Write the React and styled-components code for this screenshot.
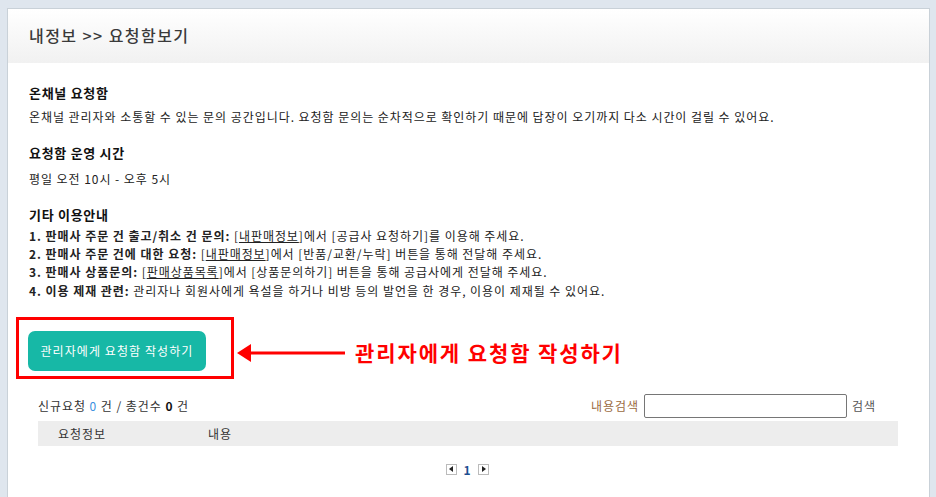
import React from "react";
import styled, { createGlobalStyle } from "styled-components";

const GlobalStyle = createGlobalStyle`
  html, body {
    margin: 0;
    padding: 0;
    background: #dfe6ee;
    font-family: "Noto Sans CJK KR", "Noto Sans", sans-serif;
    color: #222;
    letter-spacing: 0.95px;
  }
`;

const guides = [
  {
    label: "1. 판매사 주문 건 출고/취소 건 문의:",
    link: "내판매정보",
    rest: "에서 [공급사 요청하기]를 이용해 주세요.",
  },
  {
    label: "2. 판매사 주문 건에 대한 요청:",
    link: "내판매정보",
    rest: "에서 [반품/교환/누락] 버튼을 통해 전달해 주세요.",
  },
  {
    label: "3. 판매사 상품문의:",
    link: "판매상품목록",
    rest: "에서 [상품문의하기] 버튼을 통해 공급사에게 전달해 주세요.",
  },
  {
    label: "4. 이용 제재 관련:",
    rest: "관리자나 회원사에게 욕설을 하거나 비방 등의 발언을 한 경우, 이용이 제재될 수 있어요.",
  },
];

const App = () => {
  return (
    <>
      <GlobalStyle />
      <Page>
        <Panel>
          <Header>
            <Title>내정보 &gt;&gt; 요청함보기</Title>
          </Header>
          <Content>
            <Section>
              <Heading>온채널 요청함</Heading>
              <Text>
                온채널 관리자와 소통할 수 있는 문의 공간입니다. 요청함 문의는
                순차적으로 확인하기 때문에 답장이 오기까지 다소 시간이 걸릴 수
                있어요.
              </Text>
            </Section>
            <Section>
              <Heading $gap="7px">요청함 운영 시간</Heading>
              <Text>평일 오전 10시 - 오후 5시</Text>
            </Section>
            <Section>
              <Heading $gap="2px">기타 이용안내</Heading>
              {guides.map((g) => (
                <ListLine key={g.label}>
                  <b>{g.label}</b>{" "}
                  {g.link && (
                    <>
                      [<Under>{g.link}</Under>]
                    </>
                  )}
                  {g.rest}
                </ListLine>
              ))}
            </Section>

            <ActionRow>
              <Highlight>
                <WriteButton>관리자에게 요청함 작성하기</WriteButton>
              </Highlight>
              <Arrow width="110" height="22" viewBox="0 0 110 22">
                <polygon points="0,11 14,2 14,20" fill="#ff0000" />
                <rect x="12" y="9.5" width="96" height="3" fill="#ff0000" />
              </Arrow>
              <Callout>관리자에게 요청함 작성하기</Callout>
            </ActionRow>

            <ListArea>
              <ToolRow>
                <Counts>
                  신규요청 <Blue>0</Blue> 건 / 총건수 <b>0</b> 건
                </Counts>
                <Search>
                  <SearchLabel>내용검색</SearchLabel>
                  <SearchInput />
                  <SearchBtn>검색</SearchBtn>
                </Search>
              </ToolRow>
              <TableHead>
                <Col $w="150px">요청정보</Col>
                <Col>내용</Col>
              </TableHead>
              <Pager>
                <PageBtn>
                  <svg width="5" height="6" viewBox="0 0 5 6">
                    <polygon points="4,0 4,6 0,3" fill="#222" />
                  </svg>
                </PageBtn>
                <PageNum>1</PageNum>
                <PageBtn>
                  <svg width="5" height="6" viewBox="0 0 5 6">
                    <polygon points="1,0 1,6 5,3" fill="#222" />
                  </svg>
                </PageBtn>
              </Pager>
            </ListArea>
          </Content>
        </Panel>
      </Page>
    </>
  );
};

export default App;

const Page = styled.div`
  padding: 8px 6px 0 7px;
  min-height: 497px;
  box-sizing: border-box;
`;

const Panel = styled.div`
  background: #fff;
  border: 1px solid #c9d1d8;
  border-bottom: none;
  min-height: 520px;
`;

const Header = styled.div`
  height: 54px;
  background: linear-gradient(#ffffff, #f1f1f1);
  display: flex;
  align-items: center;
  padding: 0 21px;
`;

const Title = styled.h1`
  margin: 0;
  font-size: 16px;
  font-weight: 500;
  color: #3a3a3a;
  line-height: 20px;
  padding-bottom: 2px;
  letter-spacing: 0.09em;
`;

const Content = styled.div`
  padding: 20px 21px 0 21px;
`;

const Section = styled.div`
  margin-bottom: 17px;
`;

const Heading = styled.h2`
  margin: 0 0 ${({ $gap }) => $gap || "5px"};
  font-size: 13px;
  font-weight: 700;
  line-height: 20px;
  color: #111;
  letter-spacing: 0.7px;
`;

const Text = styled.p`
  margin: 0;
  font-size: 12px;
  line-height: 18px;
  color: #222;
`;

const ListLine = styled.p`
  margin: 0;
  font-size: 12px;
  line-height: 18.2px;
  color: #222;

  b {
    font-weight: 700;
  }
`;

const Under = styled.span`
  text-decoration: underline;
`;

const ActionRow = styled.div`
  display: flex;
  align-items: center;
  margin-top: 16px;
`;

const Highlight = styled.div`
  margin-left: -13px;
  border: 3px solid #ff0000;
  padding: 11px 25px 5px 9px;
`;

const WriteButton = styled.button`
  width: 178px;
  height: 40px;
  border: none;
  border-radius: 7px;
  background: #17b8a6;
  color: #fff;
  font-family: inherit;
  font-size: 12px;
  letter-spacing: 0.09em;
  cursor: pointer;
`;

const Arrow = styled.svg`
  margin-left: 3px;
  margin-top: 10px;
  flex-shrink: 0;
`;

const Callout = styled.span`
  margin-left: 8px;
  margin-top: 9px;
  font-size: 21px;
  font-weight: 700;
  color: #ff0000;
  line-height: 26px;
  letter-spacing: 0.09em;
`;

const ListArea = styled.div`
  margin: 15px 10px 0 9px;
`;

const ToolRow = styled.div`
  display: flex;
  justify-content: space-between;
  align-items: center;
  height: 24px;
  padding-right: 22px;
`;

const Counts = styled.div`
  font-size: 12px;
  color: #333;

  b {
    font-weight: 700;
    color: #111;
  }
`;

const Blue = styled.span`
  color: #3a8fe0;
`;

const Search = styled.div`
  display: flex;
  align-items: center;
  gap: 5px;
  font-size: 12px;
`;

const SearchLabel = styled.span`
  color: #9a6a3e;
`;

const SearchInput = styled.input`
  width: 203px;
  height: 24px;
  box-sizing: border-box;
  border: 1px solid #767676;
  border-radius: 2px;
  margin: 0;
`;

const SearchBtn = styled.span`
  color: #555;
`;

const TableHead = styled.div`
  display: flex;
  margin-top: 3px;
  height: 25px;
  align-items: center;
  background: #ededed;
  padding-left: 20px;
  font-size: 12px;
  color: #333;
`;

const Col = styled.div`
  width: ${({ $w }) => $w || "auto"};
`;

const Pager = styled.div`
  display: flex;
  justify-content: center;
  align-items: center;
  gap: 4px;
  margin-top: 15px;
  padding-right: 1px;
`;

const PageBtn = styled.span`
  width: 11px;
  height: 11px;
  box-sizing: border-box;
  border: 1px solid #bbb;
  display: flex;
  align-items: center;
  justify-content: center;
`;

const PageNum = styled.span`
  font-size: 12px;
  font-weight: 700;
  color: #1d4f91;
  padding: 0 2px;
`;
